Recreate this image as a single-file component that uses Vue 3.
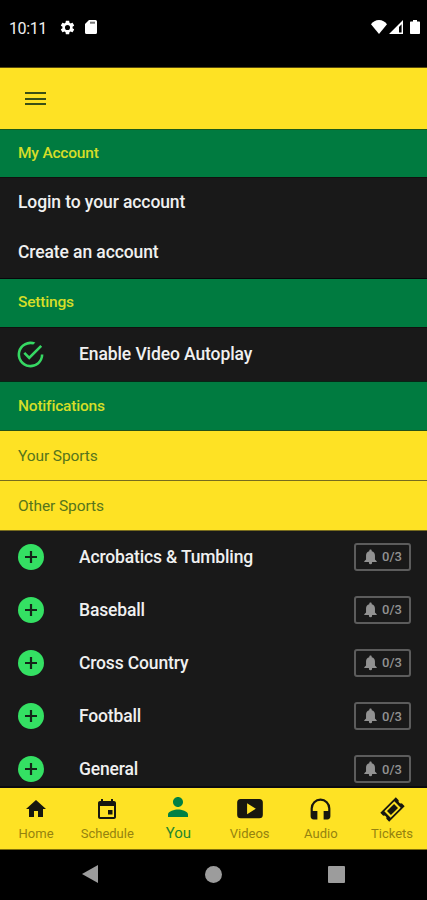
<script setup>
const sports = ['Acrobatics & Tumbling', 'Baseball', 'Cross Country', 'Football', 'General']

const tabs = [
  { label: 'Home', box: '0 0 24 24', size: 24, path: 'M10 20v-6h4v6h5v-8h3L12 3 2 12h3v8z' },
  { label: 'Schedule', box: '0 0 24 24', size: 24, path: 'M19 4h-1V2h-2v2H8V2H6v2H5c-1.100 0-2 .9-2 2v14c0 1.100.9 2 2 2h14c1.100 0 2-.9 2-2V6c0-1.100-.9-2-2-2zm0 16H5V9h14v11zM13 13h4.500v4.500H13z' },
  { label: 'You', box: '0 0 24 24', size: 30, active: true, path: 'M12 12c2.210 0 4-1.790 4-4s-1.790-4-4-4-4 1.790-4 4 1.790 4 4 4zm0 2c-2.670 0-8 1.340-8 4v2h16v-2c0-2.660-5.330-4-8-4z' },
  { label: 'Videos', box: '0 0 24 24', size: 28, path: 'M4 3.500h16a3 3 0 0 1 3 3v10.400a3 3 0 0 1-3 3H4a3 3 0 0 1-3-3V6.500a3 3 0 0 1 3-3zM9.500 7v9.500L17 11.750z' },
  { label: 'Audio', box: '0 0 24 24', size: 25, path: 'M12 1.500A9.500 9.500 0 0 0 2.500 11v7.500a3 3 0 0 0 3 3H9v-8H4.600V11a7.400 7.400 0 0 1 14.800 0v2.500H15v8h3.500a3 3 0 0 0 3-3V11A9.500 9.500 0 0 0 12 1.500z' },
  { label: 'Tickets', box: '0 0 24 24', size: 25, ticket: true },
]
</script>

<template>
  <div class="screen">
    <header class="status">
      <span class="clock">10:11</span>
      <svg class="gear" viewBox="0 0 24 24"><path fill-rule="evenodd" d="M19.140 12.940c.04-.3.060-.61.060-.94s-.02-.64-.07-.94l2.030-1.580c.18-.14.230-.41.120-.61l-1.920-3.320c-.12-.22-.37-.29-.59-.22l-2.390.96c-.5-.38-1.030-.7-1.620-.94l-.36-2.540c-.04-.24-.24-.41-.48-.41h-3.840c-.24 0-.43.17-.47.41l-.36 2.540c-.59.24-1.130.57-1.620.94l-2.390-.96c-.22-.08-.47 0-.59.22L2.740 8.870c-.12.21-.08.47.12.610l2.030 1.580c-.05.3-.09.63-.09.94s.02.64.07.94l-2.030 1.580c-.18.14-.23.41-.12.610l1.920 3.320c.12.220.37.290.59.220l2.390-.96c.5.380 1.030.7 1.620.94l.36 2.540c.05.240.24.410.48.410h3.840c.24 0 .44-.17.470-.41l.36-2.540c.59-.24 1.130-.56 1.620-.94l2.390.96c.22.080.47 0 .59-.22l1.920-3.320c.12-.22.070-.47-.12-.61zM12 15.600A3.600 3.600 0 1 1 12 8.400a3.600 3.600 0 0 1 0 7.200z"/></svg>
      <svg class="card" viewBox="0 0 12 14"><path d="M4 0h6.500A1.500 1.500 0 0 1 12 1.500v11a1.500 1.500 0 0 1-1.500 1.500h-9A1.500 1.500 0 0 1 0 12.500V4z"/><path d="M5 1.700h5v2H5z" fill="#777"/></svg>
      <span class="spacer"></span>
      <svg class="wifi" viewBox="0 0 16 14"><path d="M8 14 0 4.200C1.800 1.700 4.700 0 8 0s6.200 1.700 8 4.200z"/></svg>
      <svg class="signal" viewBox="0 0 14 14"><path d="M14 0v14H0zM12.600 4.300 10 6.900v5.700h2.600z" fill-rule="evenodd"/></svg>
      <svg class="battery" viewBox="0 0 10 14"><path d="M3 0h4v1.400h2c.6 0 1 .4 1 1V13c0 .6-.4 1-1 1H1c-.6 0-1-.4-1-1V2.400c0-.6.4-1 1-1h2z"/></svg>
    </header>

    <div class="toolbar">
      <div class="menu"><i></i><i></i><i></i></div>
    </div>

    <main class="content">
      <h2 class="section first">My Account</h2>
      <div class="link">Login to your account</div>
      <div class="link">Create an account</div>
      <h2 class="section settings">Settings</h2>
      <div class="toggle">
        <svg class="check" viewBox="0 0 24 24"><path d="M20 12a8 8 0 1 1-5.800-7.690l1.570-1.570A10 10 0 1 0 22 12zM7.910 10.080 6.500 11.500 11 16 21 6l-1.410-1.420L11 13.170z"/></svg>
        <span>Enable Video Autoplay</span>
      </div>
      <h2 class="section notifications">Notifications</h2>
      <h3 class="group">Your Sports</h3>
      <h3 class="group">Other Sports</h3>
      <div v-for="sport in sports" :key="sport" class="sport">
        <svg class="plus" viewBox="0 0 26 26"><circle cx="13" cy="13" r="13"/><path d="M13 7v12M7 13h12"/></svg>
        <span>{{ sport }}</span>
        <div class="badge">
          <svg class="bell" viewBox="0 0 14 16"><path d="M7 0c.8 0 1.300.5 1.300 1.300v.4c2.300.6 3.500 2.400 3.500 4.700v4.200l1.900 1.900v.9H.3v-.9l1.900-1.900V6.400c0-2.300 1.200-4.100 3.500-4.700v-.4C5.700.5 6.200 0 7 0zM5.300 13.400h3.400v.8a1.700 1.700 0 0 1-3.400 0z"/></svg>
          <span>0/3</span>
        </div>
      </div>
    </main>

    <nav class="tabs">
      <div v-for="tab in tabs" :key="tab.label" class="tab" :class="{ active: tab.active }">
        <div class="icon">
          <svg v-if="tab.ticket" :width="tab.size" :height="tab.size" :viewBox="tab.box">
            <g transform="rotate(-45 12 12)">
              <path fill-rule="evenodd" d="M1.500 6h21v3.900a2.300 2.300 0 0 0 0 4.200V18h-21v-3.900a2.300 2.300 0 0 0 0-4.200zM5.200 7.700v8.600h13.600V7.700z"/>
              <path d="M7.200 9.300h9.600v5.400H7.200z"/>
            </g>
          </svg>
          <svg v-else :width="tab.size" :height="tab.size" :viewBox="tab.box"><path fill-rule="evenodd" :d="tab.path"/></svg>
        </div>
        <span>{{ tab.label }}</span>
      </div>
    </nav>

    <footer class="system">
      <svg viewBox="0 0 16 18" width="16" height="18"><path d="M16 0v18L0 9z"/></svg>
      <svg viewBox="0 0 17 17" width="17" height="17"><circle cx="8.500" cy="8.500" r="8.500"/></svg>
      <svg viewBox="0 0 17 17" width="17" height="17"><rect width="17" height="17" rx="1"/></svg>
    </footer>
  </div>
</template>

<style>
body { margin: 0; background: #000; }
</style>

<style scoped>
* { box-sizing: border-box; }
.screen {
  width: 427px; height: 900px; overflow: hidden;
  display: flex; flex-direction: column;
  background: #000; color: #f0f0f0;
  font-family: Roboto, sans-serif;
}
h2, h3 { margin: 0; }
svg { display: block; flex: none; }
.status {
  flex: none; height: 68px; padding: 20px 7px 0 9px;
  display: flex; align-items: flex-start; fill: #fff;
  border-bottom: 1px solid #57480d;
}
.clock { width: 50px; padding-top: 1px; font-size: 16px; line-height: 16px; letter-spacing: -0.4px; }
.gear { width: 17px; height: 17px; margin-top: -1px; }
.card { width: 12px; height: 14px; margin-left: 9px; }
.spacer { flex: 1; }
.wifi { width: 16px; height: 14px; }
.signal { width: 14px; height: 14px; margin-left: 2px; }
.battery { width: 10px; height: 14px; margin-left: 7px; }
.toolbar {
  flex: none; height: 61px; padding: 24px 25px 0;
  background: #fee224;
}
.menu { display: flex; flex-direction: column; gap: 3.500px; width: 21px; }
.menu i { height: 2px; background: #3a5015; }
.content { flex: none; height: 659px; overflow: hidden; background: #191919; border-bottom: 2px solid #0b0a0f; }
.section {
  height: 50px; padding-left: 18px; line-height: 47px;
  background: #007b40; color: #d5de28;
  border-bottom: 1px solid #12100f;
  font-size: 15.500px; font-weight: 500; letter-spacing: -0.2px;
}
.first { height: 49px; border-top: 1px solid #1c5c18; }
.settings { border-top: 1px solid #08050a; line-height: 47px; }
.notifications { height: 50px; border-top: 1px solid #072515; border-bottom: 1px solid #23521a; line-height: 49px; }
.link { height: 50px; padding-left: 18px; line-height: 49px; }
.link, .toggle, .sport { font-size: 17.500px; font-weight: 500; letter-spacing: -0.100px; }
.toggle, .sport { display: flex; align-items: center; padding-left: 18px; }
.toggle { height: 53px; padding-bottom: 2px; }
.check { width: 31px; height: 31px; margin: 1px 33px 0 -3px; fill: #36d863; }
.group {
  height: 50px; padding-left: 18px; line-height: 50px;
  background: #fee224; color: #56751c;
  border-bottom: 1px solid #776c1e;
  font-size: 15.500px; font-weight: 400; letter-spacing: -0.100px;
}
.sport { height: 53.200px; padding: 0 16px 2px 18px; letter-spacing: -0.150px; }
.plus { width: 26px; height: 26px; margin-right: 35px; fill: #34e063; }
.plus path { stroke: #142519; stroke-width: 2.200; }
.badge {
  width: 57px; height: 28px; margin-left: auto;
  display: flex; align-items: center; gap: 5px; padding-left: 8px;
  border: 2px solid #5c5c5c; border-radius: 3px;
  color: #929292; fill: #929292; font-size: 13px; letter-spacing: 0;
}
.bell { width: 13px; height: 16px; }
.tabs {
  flex: none; height: 62px; padding-bottom: 1px;
  display: grid; grid-template-columns: repeat(6, 71.200px);
  padding-left: 0.500px;
  background: #fee224; border-bottom: 1px solid #80700c;
}
.tab { display: flex; flex-direction: column; align-items: center; color: #95820f; fill: #17170f; font-size: 13px; }
.icon { height: 38px; padding-top: 4px; display: flex; align-items: center; }
.tab span { line-height: 16px; }
.active { color: #25872d; fill: #008044; font-size: 15px; }
.active .icon { padding: 0 0 1px; }
.active span { margin-top: -1px; }
.system {
  flex: 1; padding: 0 82px 2px; display: flex; align-items: center; justify-content: space-between;
  fill: #9c9c9c;
}
</style>
